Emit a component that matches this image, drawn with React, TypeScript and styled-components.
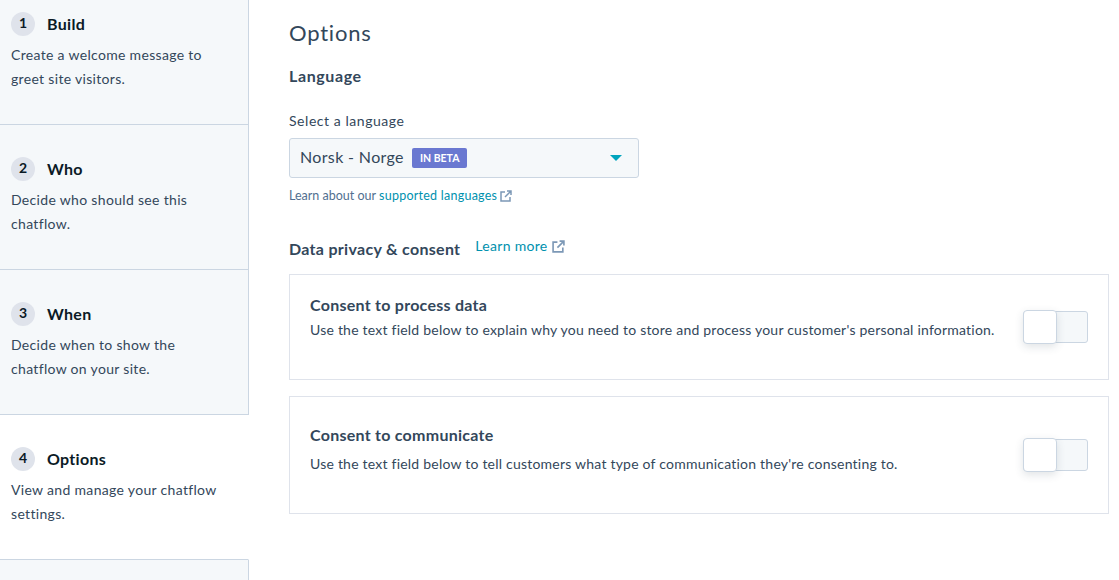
import styled, { createGlobalStyle } from 'styled-components';

const steps = [
  { num: 1, title: 'Build', text: ['Create a welcome message to', 'greet site visitors.'] },
  { num: 2, title: 'Who', text: ['Decide who should see this', 'chatflow.'] },
  { num: 3, title: 'When', text: ['Decide when to show the', 'chatflow on your site.'] },
  { num: 4, title: 'Options', text: ['View and manage your chatflow', 'settings.'], active: true },
];

function ExternalIcon({ size = 12 }: { size?: number }) {
  return (
    <svg width={size} height={size} viewBox="0 0 12 12" fill="none" stroke="#7c98b6" strokeWidth="1.5">
      <path d="M5 2H1v9h9V7" />
      <path d="M7 1h4v4M11 1L5 7" />
    </svg>
  );
}

function App() {
  return (
    <Page>
      <GlobalStyle />
      <Sidebar>
        {steps.map((step) => (
          <Step key={step.num} $active={step.active}>
            <StepHead>
              <StepNum>{step.num}</StepNum>
              <StepTitle>{step.title}</StepTitle>
            </StepHead>
            <StepText>
              {step.text[0]}
              <br />
              {step.text[1]}
            </StepText>
          </Step>
        ))}
        <Step />
      </Sidebar>
      <Main>
        <Heading>Options</Heading>
        <SectionTitle>Language</SectionTitle>
        <FieldLabel>Select a language</FieldLabel>
        <SelectBox>
          <SelectValue>Norsk - Norge</SelectValue>
          <BetaTag>IN BETA</BetaTag>
          <Caret />
        </SelectBox>
        <Hint>
          Learn about our <HintLink>supported languages</HintLink>
          <ExternalIcon />
        </Hint>
        <PrivacyRow>
          <PrivacyTitle>Data privacy &amp; consent</PrivacyTitle>
          <LearnMore>
            Learn more
            <ExternalIcon size={13} />
          </LearnMore>
        </PrivacyRow>
        <CardList>
          <Card $height={106}>
            <CardBody $gap={5} $lift={20}>
              <CardTitle>Consent to process data</CardTitle>
              <CardText>
                Use the text field below to explain why you need to store and process your customer's personal
                information.
              </CardText>
            </CardBody>
            <Toggle>
              <Knob />
            </Toggle>
          </Card>
          <Card $height={118}>
            <CardBody $gap={9} $lift={12}>
              <CardTitle>Consent to communicate</CardTitle>
              <CardText>
                Use the text field below to tell customers what type of communication they're consenting to.
              </CardText>
            </CardBody>
            <Toggle>
              <Knob />
            </Toggle>
          </Card>
        </CardList>
      </Main>
    </Page>
  );
}

const GlobalStyle = createGlobalStyle`
  html, body {
    margin: 0;
    padding: 0;
    background: #fff;
    font-family: Lato, "Open Sans", sans-serif;
  }
`;

const Page = styled.div`
  display: flex;
  width: 1119px;
  height: 580px;
  overflow: hidden;
  background: #fff;
`;

const Sidebar = styled.div`
  flex: 0 0 249px;
  width: 249px;
`;

const Step = styled.div<{ $active?: boolean }>`
  box-sizing: border-box;
  height: 145px;
  padding: 32px 11px 0;
  background: ${(p) => (p.$active ? '#fff' : '#f5f8fa')};
  border-right: 1px solid ${(p) => (p.$active ? 'transparent' : '#cbd6e2')};
  border-bottom: 1px solid #cbd6e2;

  &:first-child {
    height: 125px;
    padding-top: 12px;
  }
`;

const StepHead = styled.div`
  display: flex;
  align-items: center;
  gap: 12px;
`;

const StepNum = styled.div`
  width: 24px;
  height: 24px;
  border-radius: 50%;
  background: #dfe3eb;
  color: #0b1a26;
  font-size: 14px;
  font-weight: 700;
  line-height: 21px;
  text-align: center;
`;

const StepTitle = styled.div`
  color: #0b1a26;
  font-size: 16px;
  font-weight: 700;
  line-height: 24px;
  letter-spacing: 0.3px;
`;

const StepText = styled.div`
  margin-top: 7px;
  color: #33475b;
  font-size: 14px;
  line-height: 24px;
  letter-spacing: 0.32px;
`;

const Main = styled.div`
  flex: 1;
  padding: 0 10px 0 40px;
  color: #33475b;
`;

const Heading = styled.h1`
  margin: 19px 0 0;
  font-size: 22px;
  font-weight: 400;
  line-height: 28px;
  letter-spacing: 0.8px;
`;

const SectionTitle = styled.h2`
  margin: 17px 0 0;
  font-size: 16px;
  font-weight: 700;
  line-height: 24px;
  letter-spacing: 0.6px;
`;

const FieldLabel = styled.div`
  margin-top: 21px;
  font-size: 14px;
  line-height: 24px;
  letter-spacing: 0.55px;
`;

const SelectBox = styled.div`
  box-sizing: border-box;
  display: flex;
  align-items: center;
  width: 350px;
  height: 40px;
  margin-top: 5px;
  padding: 0 16px 0 10px;
  background: #f5f8fa;
  border: 1px solid #cbd6e2;
  border-radius: 3px;
`;

const SelectValue = styled.span`
  margin-top: -3px;
  font-size: 16px;
  letter-spacing: 0.35px;
`;

const BetaTag = styled.span`
  margin-left: 8px;
  padding: 0 8px;
  background: #6a78d1;
  border-radius: 2px;
  color: #fff;
  font-size: 10.5px;
  font-weight: 700;
  line-height: 20px;
`;

const Caret = styled.span`
  margin-left: auto;
  width: 0;
  height: 0;
  border-left: 6px solid transparent;
  border-right: 6px solid transparent;
  border-top: 6px solid #00a4bd;
`;

const Hint = styled.div`
  display: flex;
  align-items: center;
  margin-top: 8px;
  color: #516f90;
  font-size: 12.5px;
  line-height: 20px;
  white-space: pre;

  svg {
    margin-left: 3px;
  }
`;

const HintLink = styled.span`
  color: #0091ae;
  letter-spacing: 0.25px;
`;

const PrivacyRow = styled.div`
  display: flex;
  align-items: flex-start;
  gap: 15px;
  margin-top: 31px;
`;

const PrivacyTitle = styled.div`
  font-size: 16px;
  font-weight: 700;
  line-height: 24px;
  letter-spacing: 0.3px;
`;

const LearnMore = styled.div`
  display: flex;
  align-items: center;
  gap: 4px;
  margin-top: -3px;
  color: #0091ae;
  font-size: 14px;
  line-height: 24px;
  letter-spacing: 0.3px;
`;

const CardList = styled.div`
  display: flex;
  flex-direction: column;
  gap: 16px;
  margin-top: 13px;
`;

const Card = styled.div<{ $height: number }>`
  box-sizing: border-box;
  display: flex;
  align-items: center;
  justify-content: space-between;
  height: ${(p) => p.$height}px;
  padding: 0 20px;
  border: 1px solid #dfe3eb;
`;

const CardBody = styled.div<{ $gap: number; $lift: number }>`
  display: flex;
  flex-direction: column;
  gap: ${(p) => p.$gap}px;
  margin-bottom: ${(p) => p.$lift}px;
`;

const CardTitle = styled.div`
  font-size: 16px;
  font-weight: 700;
  line-height: 20px;
  letter-spacing: 0.26px;
`;

const CardText = styled.div`
  font-size: 14px;
  line-height: 20px;
  letter-spacing: 0.22px;
`;

const Toggle = styled.div`
  box-sizing: border-box;
  display: flex;
  align-items: center;
  flex: 0 0 65px;
  height: 32px;
  background: #f5f8fa;
  border: 1px solid #cbd6e2;
  border-radius: 3px;
`;

const Knob = styled.div`
  box-sizing: border-box;
  width: 34px;
  height: 34px;
  margin-left: -1px;
  background: #fff;
  border: 1px solid #cbd6e2;
  border-radius: 4px;
  box-shadow: 0 3px 8px rgba(45, 62, 80, 0.14);
`;

export default App;
